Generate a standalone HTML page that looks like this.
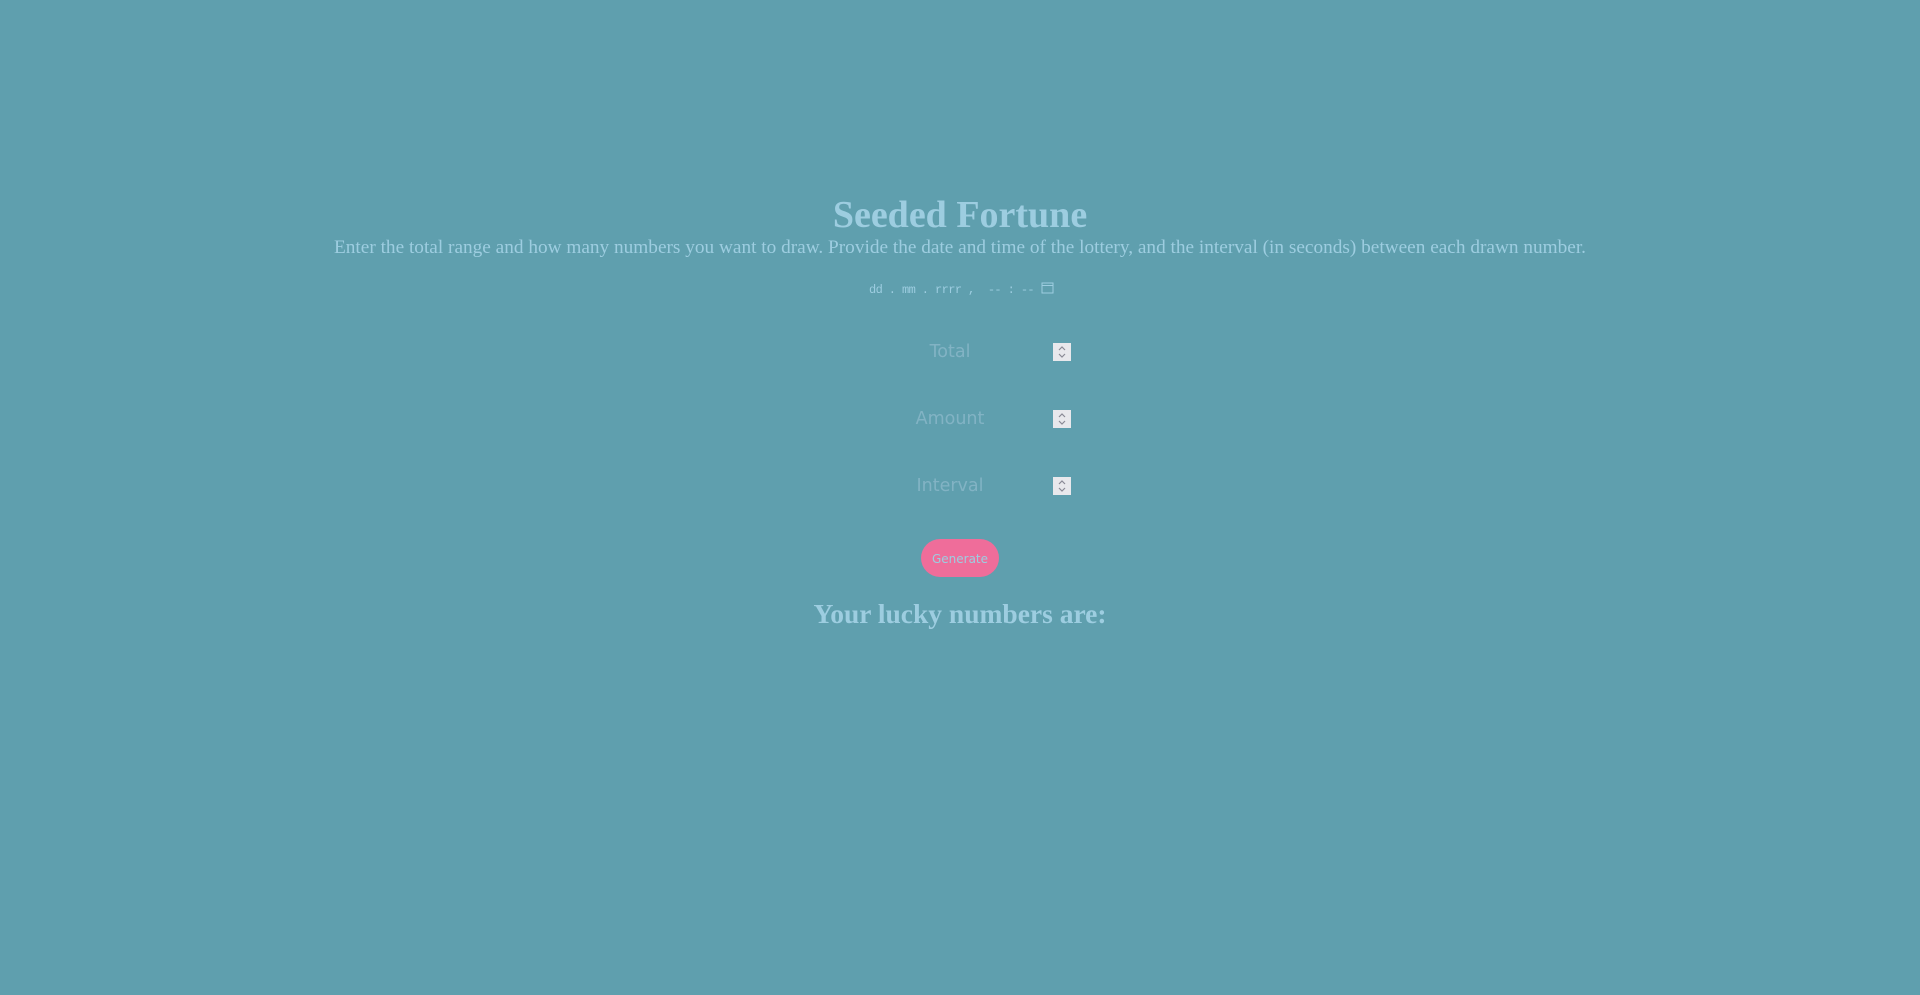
<!DOCTYPE html>
<html><head><meta charset="utf-8"><style>
html,body{margin:0;padding:0;width:1920px;height:995px;background:#5f9fae;overflow:hidden}
.c{position:absolute;left:0;width:1920px;text-align:center}
h1{position:absolute;left:0;width:1920px;text-align:center;margin:0;top:193px;font:bold 38px "Liberation Serif",serif;color:#9dcde0}
.d{top:237px;font:19.3px "Liberation Serif",serif;color:#9dcde0}
.dt{top:281px;font:12px "Liberation Mono",monospace;color:#9dcde0;left:869px;width:auto;text-align:left;letter-spacing:-0.6px}
.ph{position:absolute;width:120px;text-align:center;left:890px;font:17.5px "DejaVu Sans",sans-serif;color:#82b3c4}
.sp{position:absolute;left:1053px;width:18px;height:18px;background:#e8e8ec}
.sp svg{display:block}
.btn{position:absolute;left:921px;top:539px;width:78px;height:38px;border-radius:19px;background:#ef6d9a;color:#9dcde0;font:12px "DejaVu Sans",sans-serif;text-align:center;line-height:40px}
h2{position:absolute;left:0;width:1920px;text-align:center;margin:0;top:598px;font:bold 27.5px "Liberation Serif",serif;color:#9dcde0}
</style></head><body>
<h1>Seeded Fortune</h1>
<div class="c d">Enter the total range and how many numbers you want to draw. Provide the date and time of the lottery, and the interval (in seconds) between each drawn number.</div>
<div class="c dt">dd . mm . rrrr ,&nbsp; -- : -- <svg width="13" height="13" viewBox="0 0 13 13" style="vertical-align:-1px"><rect x="1" y="2" width="11" height="10" fill="none" stroke="#9dcde0"/><line x1="1" y1="4.5" x2="12" y2="4.5" stroke="#9dcde0"/></svg></div>
<div class="ph" style="top:342px">Total</div>
<div class="ph" style="top:409px">Amount</div>
<div class="ph" style="top:476px">Interval</div>
<div class="sp" style="top:343px"><svg width="18" height="18"><path d="M6 7l3-3 3 3M6 11l3 3 3-3" fill="none" stroke="#8a8a96" stroke-width="1.2"/></svg></div>
<div class="sp" style="top:410px"><svg width="18" height="18"><path d="M6 7l3-3 3 3M6 11l3 3 3-3" fill="none" stroke="#8a8a96" stroke-width="1.2"/></svg></div>
<div class="sp" style="top:477px"><svg width="18" height="18"><path d="M6 7l3-3 3 3M6 11l3 3 3-3" fill="none" stroke="#8a8a96" stroke-width="1.2"/></svg></div>
<div class="btn">Generate</div>
<h2>Your lucky numbers are:</h2>
</body></html>
